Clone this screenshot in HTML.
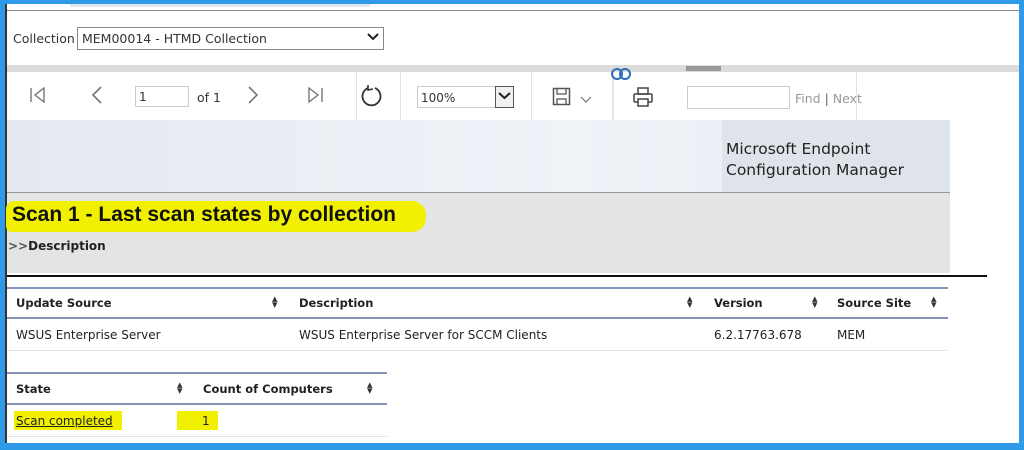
<!DOCTYPE html>
<html><head><style>
*{margin:0;padding:0;box-sizing:border-box}
body{width:1024px;height:450px;overflow:hidden;background:#2f9be8;font-family:"DejaVu Sans","Liberation Sans",sans-serif;position:relative}
.a{position:absolute}
.frame{left:5px;top:4px;width:1014px;height:439px;background:#fff;border-left:2px solid #333}
.t{font-size:12px;color:#222;white-space:nowrap}
.b{font-weight:bold;font-size:11.5px;color:#222}
.sort{font-size:11px;color:#333;line-height:6px}
</style></head><body>
<div class="a frame"></div>
<div class="a" style="left:7px;top:10px;width:1012px;height:1px;background:#888"></div>
<div class="a" style="left:70px;top:4px;width:300px;height:3px;background:#dde8f2"></div>
<div class="a t" style="left:13px;top:31px;font-size:12.5px;color:#333">Collection</div>
<div class="a" style="left:77px;top:27px;width:307px;height:23px;border:1px solid #888;background:#fff"></div>
<div class="a t" style="left:82px;top:31px;font-size:12.5px;color:#333">MEM00014 - HTMD Collection</div>
<svg class="a" style="left:367px;top:33px" width="12" height="9"><path d="M1 1L6 6L11 1" stroke="#222" stroke-width="2" fill="none"/></svg>
<div class="a" style="left:7px;top:65px;width:1012px;height:7px;background:#dcdcdc"></div>
<div class="a" style="left:686px;top:66px;width:35px;height:5px;background:#999"></div>
<div class="a" style="left:7px;top:72px;width:350px;height:48px;border-right:1px solid #e4e4e4"></div>
<div class="a" style="left:357px;top:72px;width:44px;height:48px;border-right:1px solid #e4e4e4"></div>
<div class="a" style="left:531px;top:72px;width:82px;height:48px;border-left:1px solid #e4e4e4;border-right:1px solid #e4e4e4"></div>
<div class="a" style="left:613px;top:72px;width:244px;height:48px;border-left:1px solid #e4e4e4;border-right:1px solid #e4e4e4"></div>
<svg class="a" style="left:28px;top:86px" width="20" height="18"><path d="M3 2V16M16 2L7 9L16 16Z" stroke="#777" stroke-width="1.4" fill="none"/></svg>
<svg class="a" style="left:90px;top:85px" width="14" height="20"><path d="M11 2L3 10L11 18" stroke="#777" stroke-width="1.6" fill="none"/></svg>
<div class="a" style="left:135px;top:86px;width:54px;height:21px;border:1px solid #ccc"></div>
<div class="a t" style="left:139px;top:90px;color:#333">1</div>
<div class="a t" style="left:197px;top:90px;color:#333;font-size:12.5px">of 1</div>
<svg class="a" style="left:246px;top:85px" width="14" height="20"><path d="M3 2L11 10L3 18" stroke="#777" stroke-width="1.6" fill="none"/></svg>
<svg class="a" style="left:305px;top:86px" width="20" height="18"><path d="M17 2V16M4 2L13 9L4 16Z" stroke="#777" stroke-width="1.4" fill="none"/></svg>
<svg class="a" style="left:360px;top:84px" width="24" height="24"><path d="M8 4A9 9 0 1 0 15 4" stroke="#333" stroke-width="1.8" fill="none"/><path d="M8 1L8 6L13 5" stroke="#333" stroke-width="1.6" fill="none"/></svg>
<div class="a" style="left:417px;top:86px;width:97px;height:22px;border:1px solid #ccc"></div>
<div class="a t" style="left:421px;top:91px;color:#333">100%</div>
<div class="a" style="left:495px;top:86px;width:19px;height:22px;border:1px solid #555;background:#f0f0f0"></div>
<svg class="a" style="left:498px;top:92px" width="13" height="9"><path d="M1 1L6.5 6L12 1" stroke="#222" stroke-width="2" fill="none"/></svg>
<svg class="a" style="left:552px;top:87px" width="20" height="20"><rect x="1.5" y="1.5" width="16" height="16" stroke="#555" stroke-width="1.5" fill="none"/><path d="M5 2V7H14V2M5 17V12H14V17" stroke="#555" stroke-width="1.3" fill="none"/></svg>
<svg class="a" style="left:580px;top:96px" width="12" height="8"><path d="M1 1L6 6L11 1" stroke="#777" stroke-width="1.2" fill="none"/></svg>
<svg class="a" style="left:610px;top:67px" width="22" height="14"><circle cx="7" cy="7" r="5" stroke="#2a6fb8" stroke-width="2" fill="none"/><circle cx="15" cy="7" r="5" stroke="#2a6fb8" stroke-width="2" fill="none"/></svg>
<svg class="a" style="left:632px;top:86px" width="22" height="22"><rect x="6" y="2" width="10" height="6" stroke="#444" stroke-width="1.5" fill="none"/><rect x="2" y="8" width="18" height="8" rx="1" stroke="#444" stroke-width="1.5" fill="none"/><rect x="6" y="13" width="10" height="7" stroke="#444" stroke-width="1.5" fill="#fff"/></svg>
<div class="a" style="left:687px;top:86px;width:103px;height:23px;border:1px solid #ccc"></div>
<div class="a t" style="left:795px;top:91px;color:#999;font-size:12.5px">Find <span style="color:#666">|</span> Next</div>
<div class="a" style="left:7px;top:120px;width:943px;height:73px;background:linear-gradient(90deg,#e4eaf0,#eef3f8 60%,#e6ecf2);border-bottom:1px solid #999"></div>
<div class="a" style="left:722px;top:120px;width:228px;height:72px;background:#dee4ea"></div>
<div class="a t" style="left:726px;top:139px;font-size:15.5px;color:#222;line-height:21px">Microsoft Endpoint<br>Configuration Manager</div>
<div class="a" style="left:7px;top:193px;width:943px;height:80px;background:#e3e5e5"></div>
<div class="a" style="left:6px;top:201px;width:420px;height:31px;background:#f0f000;border-radius:8px 14px 14px 6px"></div>
<div class="a t" style="left:12px;top:203px;font-family:'Liberation Sans',sans-serif;font-size:21px;font-weight:bold;color:#111">Scan 1 - Last scan states by collection</div>
<div class="a t" style="left:8px;top:239px;font-size:12px;font-weight:bold;color:#222"><span style="color:#555">&gt;&gt;</span>Description</div>
<div class="a" style="left:7px;top:275px;width:980px;height:2px;background:#111"></div>
<div class="a" style="left:7px;top:287px;width:941px;height:2px;background:#8494b8"></div>
<div class="a" style="left:7px;top:317px;width:941px;height:2px;background:#8494b8"></div>
<div class="a" style="left:7px;top:350px;width:941px;height:1px;background:#e4e4e4"></div>
<div class="a b" style="left:16px;top:296px">Update Source</div>
<div class="a b" style="left:299px;top:296px">Description</div>
<div class="a b" style="left:714px;top:296px">Version</div>
<div class="a b" style="left:837px;top:296px">Source Site</div>
<div class="a sort" style="left:272px;top:296px">▴<br>▾</div>
<div class="a sort" style="left:687px;top:296px">▴<br>▾</div>
<div class="a sort" style="left:812px;top:296px">▴<br>▾</div>
<div class="a sort" style="left:931px;top:296px">▴<br>▾</div>
<div class="a t" style="left:16px;top:328px">WSUS Enterprise Server</div>
<div class="a t" style="left:299px;top:328px">WSUS Enterprise Server for SCCM Clients</div>
<div class="a t" style="left:714px;top:328px">6.2.17763.678</div>
<div class="a t" style="left:837px;top:328px">MEM</div>
<div class="a" style="left:7px;top:372px;width:380px;height:2px;background:#8494b8"></div>
<div class="a" style="left:7px;top:403px;width:380px;height:2px;background:#8494b8"></div>
<div class="a" style="left:7px;top:436px;width:380px;height:1px;background:#e4e4e4"></div>
<div class="a b" style="left:16px;top:382px">State</div>
<div class="a b" style="left:203px;top:382px">Count of Computers</div>
<div class="a sort" style="left:177px;top:382px">▴<br>▾</div>
<div class="a sort" style="left:367px;top:382px">▴<br>▾</div>
<div class="a" style="left:14px;top:411px;width:108px;height:19px;background:#f0f000"></div>
<div class="a t" style="left:16px;top:414px;text-decoration:underline">Scan completed</div>
<div class="a" style="left:177px;top:411px;width:41px;height:19px;background:#f0f000"></div>
<div class="a t" style="left:202px;top:414px">1</div>
</body></html>
